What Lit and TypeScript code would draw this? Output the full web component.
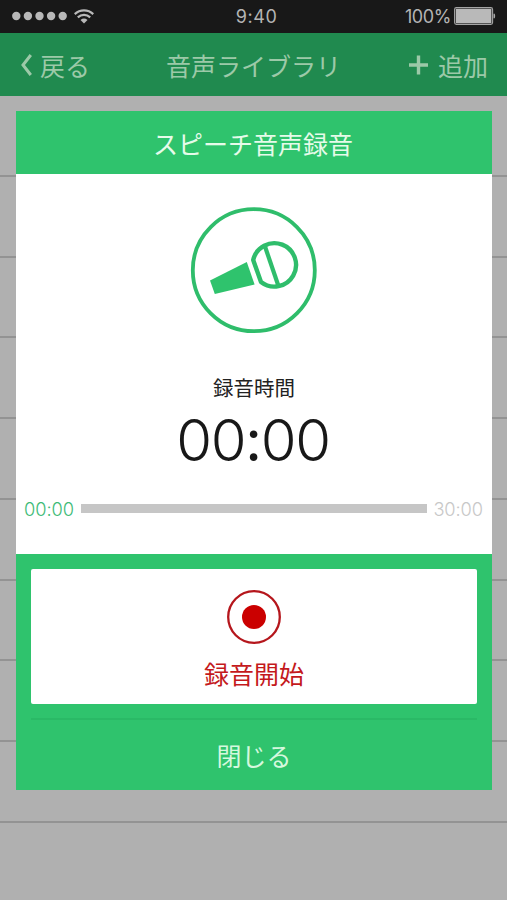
import { LitElement, html, css, svg } from "lit";
import { customElement } from "lit/decorators.js";

const ROWS = Array.from({ length: 9 });

@customElement("app-root")
export class AppRoot extends LitElement {
  static styles = css`
    :host {
      display: block;
      position: relative;
      height: 900px;
      overflow: hidden;
      background: #b0b0b0;
      font-family: "Noto Sans CJK JP", sans-serif;
    }
    * { box-sizing: border-box; }
    svg { display: block; flex: none; }
    .status {
      display: grid;
      grid-template-columns: 1fr auto 1fr;
      align-items: center;
      height: 32.5px;
      padding: 0 11px 0 12px;
      background: #181818;
      color: #b4b4b4;
      font: 400 18px Inter, sans-serif;
      font-feature-settings: "calt" 0;
    }
    .signal { display: flex; align-items: center; gap: 6px; }
    .clock { padding-left: 5px; padding-top: 1px; letter-spacing: 0.6px; }
    .power { display: flex; align-items: center; justify-content: flex-end; gap: 3px; }
    .percent { letter-spacing: -0.4px; padding-top: 1px; }
    .nav {
      display: grid;
      grid-template-columns: 1fr auto 1fr;
      align-items: center;
      height: 63.5px;
      padding: 1px 19px 0 19px;
      background: #208a4f;
      color: #9cc9a8;
      font-size: 25px;
      line-height: 36px;
    }
    .back { display: flex; align-items: center; gap: 7px; padding-left: 1px; }
    .add { display: flex; align-items: center; justify-content: flex-end; gap: 9px; }
    .row { height: 80.75px; border-bottom: 2px solid #939393; }
    .dialog {
      position: absolute;
      left: 16px;
      top: 111px;
      width: 476px;
      height: 679px;
      display: flex;
      flex-direction: column;
      background: #2fc36d;
    }
    .title {
      height: 63px;
      padding: 1px 2px 0 0;
      text-align: center;
      color: #e6fbea;
      font-size: 25px;
      line-height: 63px;
    }
    .body {
      height: 380.5px;
      padding: 32px 8px 0 8px;
      background: #fff;
      display: flex;
      flex-direction: column;
      align-items: center;
    }
    .label { margin-top: 38px; font-size: 20.5px; line-height: 30px; color: #222; }
    .time {
      margin-top: 8px;
      padding-right: 2px;
      font: 300 58px/60px Inter, sans-serif;
      font-feature-settings: "calt" 0;
      letter-spacing: -1.3px;
      color: #181818;
    }
    .colon { font-weight: 400; }
    .progress {
      margin-top: 28px;
      align-self: stretch;
      display: flex;
      align-items: center;
      justify-content: space-between;
      font: 300 18.3px/22px Inter, sans-serif;
      font-feature-settings: "calt" 0;
      letter-spacing: -0.1px;
    }
    .elapsed { width: 57px; color: #3fbb78; }
    .total { width: 57px; text-align: right; color: #c8c8c8; padding-right: 1px; }
    .track { flex: 1; height: 9px; margin-bottom: 2px; background: #c6c6c6; }
    .actions { padding: 15px 15px 0; }
    .record {
      display: flex;
      flex-direction: column;
      align-items: center;
      height: 135.5px;
      padding-top: 20px;
      background: #fff;
      border-radius: 2px;
      color: #c4191c;
      font-size: 25px;
      line-height: 36px;
    }
    .record-label { margin-top: 10px; }
    .close {
      margin-top: 14px;
      border-top: 2px solid #2ab966;
      height: 72px;
      text-align: center;
      color: #d5f8de;
      font-size: 25px;
      line-height: 70px;
    }
  `;

  render() {
    return html`
      <div class="status">
        <div class="signal">
          <svg width="56" height="10" viewBox="0 0 56 10" fill="#b8b8b8">
            ${[4.3, 15.9, 27.5, 39.1, 50.7].map((x) => svg`<circle cx=${x} cy="5" r="4.2"/>`)}
          </svg>
          <svg width="20" height="15" viewBox="0 0 20 15" fill="none" stroke="#b8b8b8" stroke-width="2.2">
            <path d="M0.7 5.1C6 .1 14 .1 19.3 5.1M3.8 8.4C7.4 5 12.6 5 16.2 8.4"/>
            <path d="M6.5 10.9Q10 8 13.5 10.9L10 14.4Z" fill="#b8b8b8" stroke="none"/>
          </svg>
        </div>
        <div class="clock">9:40</div>
        <div class="power">
          <span class="percent">100%</span>
          <svg width="42" height="18" viewBox="0 0 42 18">
            <rect x=".6" y=".6" width="38" height="16.8" rx="1.8" fill="none" stroke="#a5a5a5" stroke-width="1.1"/>
            <rect x="1.8" y="1.8" width="35.6" height="14.4" fill="#b9b9b9"/>
            <path d="M39.5 6.8h1.3q.8 2.2 0 4.4h-1.3z" fill="#a8a8a8"/>
          </svg>
        </div>
      </div>
      <div class="nav">
        <div class="back">
          <svg width="13" height="22" viewBox="0 0 13 22" fill="none" stroke="#9cc9a8" stroke-width="3"><path d="M10.8 1L3 11l7.8 10"/></svg>
          <span>戻る</span>
        </div>
        <div>音声ライブラリ</div>
        <div class="add">
          <svg width="20" height="20" viewBox="0 0 20 20" stroke="#9cc9a8" stroke-width="3.4"><path d="M9.5 .5v19M0 10h19"/></svg>
          <span>追加</span>
        </div>
      </div>
      ${ROWS.map(() => html`<div class="row"></div>`)}
      <div class="dialog">
        <div class="title">スピーチ音声録音</div>
        <div class="body">
          <svg width="128" height="128" viewBox="190 206 128 128" fill="none" stroke="#2fbd6b">
            <circle cx="253.8" cy="270.2" r="61" stroke-width="3.8"/>
            <path d="M210 280.5L246.8 262L254.6 284.6L214.8 294Z" fill="#2fc36d" stroke="none"/>
            <path d="M253.2 260A21.7 21.7 0 1 1 261 282Z" stroke-width="4.4" stroke-linejoin="round"/>
            <path d="M265 246.5L278.3 285.5" stroke-width="4.2"/>
          </svg>
          <div class="label">録音時間</div>
          <div class="time">00<span class="colon">:</span>00</div>
          <div class="progress">
            <span class="elapsed">00:00</span>
            <div class="track"></div>
            <span class="total">30:00</span>
          </div>
        </div>
        <div class="actions">
          <div class="record">
            <svg width="56" height="56" viewBox="0 0 56 56">
              <circle cx="28" cy="28" r="25.8" fill="none" stroke="#b5161c" stroke-width="2.3"/>
              <circle cx="28" cy="28" r="12" fill="#cb0000"/>
            </svg>
            <div class="record-label">録音開始</div>
          </div>
          <div class="close">閉じる</div>
        </div>
      </div>
    `;
  }
}
